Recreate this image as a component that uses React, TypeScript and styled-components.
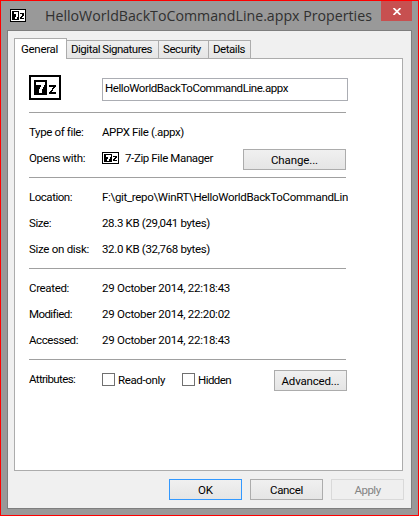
import React from "react";
import styled, { createGlobalStyle } from "styled-components";

const GlobalStyle = createGlobalStyle`
  *, *::before, *::after { box-sizing: border-box; }
  body { margin: 0; overflow: hidden; }
`;

const Window = styled.div`
  width: 419px;
  height: 516px;
  display: flex;
  flex-direction: column;
  padding: 0 6px 6px;
  border: 1px solid #ff0000;
  background: #999999;
  color: #000;
  font: 11.5px "Roboto", "Liberation Sans", sans-serif;
`;

const TitleBar = styled.header`
  height: 29px;
  flex: none;
  display: flex;
  align-items: flex-start;
  padding-left: 3px;
`;

const TitleIcon = styled.span`
  display: flex;
  margin-top: 8px;
  width: 35px;
`;

const Title = styled.h1`
  flex: 1;
  margin: 0;
  font: 400 14.2px/29px "Open Sans", "Noto Sans", sans-serif;
  color: #303030;
  white-space: nowrap;
`;

const CloseButton = styled.button`
  width: 31px;
  height: 20px;
  flex: none;
  display: flex;
  align-items: center;
  justify-content: center;
  padding: 1px 0 0;
  border: 0;
  background: #c75050;
`;

const Client = styled.main`
  flex: 1;
  display: flex;
  flex-direction: column;
  width: 405px;
  padding: 7px 6px 8px;
  border: 1px solid #7e7e7e;
  background: #f0f0f0;
`;

const TabList = styled.nav`
  display: flex;
  align-items: flex-end;
  height: 21px;
  flex: none;
  margin-bottom: -1px;
`;

const Tab = styled.button<{ $active?: boolean; $width: number }>`
  width: ${(p) => p.$width}px;
  height: ${(p) => (p.$active ? 21 : 18)}px;
  padding: 0 0 0 ${(p) => (p.$active ? 6 : 4)}px;
  margin-bottom: ${(p) => (p.$active ? 0 : 1)}px;
  border: 1px solid #acacac;
  border-left-width: ${(p) => (p.$active ? 1 : 0)}px;
  border-bottom: 0;
  background: ${(p) => (p.$active ? "#fff" : "linear-gradient(#f0f0f0, #e5e5e5)")};
  color: inherit;
  font: inherit;
  text-align: left;
  line-height: 17px;
  position: relative;
`;

const Panel = styled.section`
  width: 389px;
  height: 413px;
  flex: none;
  padding: 16px 0 0 14px;
  border: 1px solid #acacac;
  background: #fff;
`;

const Header = styled.div`
  display: flex;
  align-items: flex-start;
  height: 37px;
`;

const FileIcon = styled.span`
  display: flex;
  width: 73px;
`;

const NameField = styled.div`
  width: 246px;
  height: 23px;
  margin-top: 3px;
  padding-left: 2px;
  border: 1px solid #abadb3;
  line-height: 19px;
`;

const Divider = styled.hr`
  width: 317px;
  height: 1px;
  margin: 0;
  border: 0;
  background: #a0a0a0;
`;

const Group = styled.div`
  padding: 6px 0;
`;

const Row = styled.div`
  display: grid;
  grid-template-columns: 73px 246px;
  height: 26px;
  line-height: 26px;
`;

const Value = styled.div`
  display: flex;
  align-items: center;
  overflow: hidden;
  white-space: nowrap;
`;

const AppName = styled.span`
  flex: 1;
  padding-left: 6px;
`;

const Text = styled.span<{ $tracking?: number }>`
  display: inline-block;
  letter-spacing: ${(p) => p.$tracking ?? 0}px;
  white-space: nowrap;
`;

const Button = styled.button<{ $width?: number; $kind?: "default" | "disabled" }>`
  width: ${(p) => p.$width ?? 73}px;
  height: 21px;
  flex: none;
  padding: 1px 0 0;
  border: 1px solid
    ${(p) => (p.$kind === "default" ? "#3399ff" : p.$kind === "disabled" ? "#d9d9d9" : "#acacac")};
  background: ${(p) => (p.$kind === "disabled" ? "#efefef" : "linear-gradient(#f0f0f0, #e5e5e5)")};
  color: ${(p) => (p.$kind === "disabled" ? "#838383" : "#000")};
  font: inherit;
  line-height: 18px;
`;

const ChangeSlot = styled.span`
  display: flex;
  margin: 3px 2px 0 0;
`;

const AttributesRow = styled.div`
  display: grid;
  grid-template-columns: 73px 80px 92px 73px;
  height: 26px;
  line-height: 26px;
`;

const CheckLabel = styled.label`
  display: flex;
  align-items: center;
  gap: 3px;
  height: 28px;
`;

const Box = styled.span`
  width: 13px;
  height: 13px;
  margin-top: -1px;
  border: 1px solid #707070;
  background: #fff;
`;

const AdvancedSlot = styled.span`
  display: flex;
  align-items: flex-start;
  padding-top: 4px;
`;

const Actions = styled.footer`
  display: flex;
  justify-content: flex-end;
  gap: 8px;
  margin: 8px 1px 0 0;
`;

function SevenZip({ width, height, large }: { width: number; height: number; large?: boolean }) {
  return large ? (
    <svg width={width} height={height} viewBox="0 0 32 25" shapeRendering="crispEdges">
      <path d="M0 0h32v25H0z" />
      <path fill="#fff" d="M2 2h28v21H2z" />
      <path d="M5 5h13v15H5z" />
      <path fill="#fff" d="M7 7h9v3h-1v2h-1v2h-1v4h-3v-4h1v-2h1v-2H7z" />
      <path d="M20 10h7v2h-1v1h-1v1h-1v2h-1v1h4v2h-7v-2h1v-1h1v-1h1v-2h1v-1h-4z" />
    </svg>
  ) : (
    <svg width={width} height={height} viewBox="0 0 17 12" preserveAspectRatio="none" shapeRendering="crispEdges">
      <path d="M0 0h17v12H0z" />
      <path fill="#fff" d="M1 1h15v10H1z" />
      <path d="M2 2h8v8H2z" />
      <path fill="#fff" d="M4 3h5v2H8v2H7v2H5V7h1V5H4z" />
      <path d="M11 4h4v2h-1v1h-1v1h2v1h-4V7h1V6h1V5h-2z" />
    </svg>
  );
}

const tabs = [
  { label: "General", tracking: -0.3, width: 53, active: true },
  { label: "Digital Signatures", tracking: -0.49, width: 92 },
  { label: "Security", tracking: -0.41, width: 50 },
  { label: "Details", tracking: -0.45, width: 42 },
];

type Item = [string, number, string, number];

const storage: Item[] = [
  ["Location:", -0.47, "F:\\git_repo\\WinRT\\HelloWorldBackToCommandLin", -0.325],
  ["Size:", -0.4, "28.3 KB (29,041 bytes)", -0.34],
  ["Size on disk:", -0.29, "32.0 KB (32,768 bytes)", -0.34],
];

const dates: Item[] = [
  ["Created:", -0.34, "29 October 2014, 22:18:43", -0.26],
  ["Modified:", -0.57, "29 October 2014, 22:20:02", -0.26],
  ["Accessed:", -0.43, "29 October 2014, 22:18:43", -0.26],
];

function Rows({ items }: { items: Item[] }) {
  return (
    <Group>
      {items.map(([label, lt, value, vt]) => (
        <Row key={label}>
          <Text $tracking={lt}>{label}</Text>
          <Value>
            <Text $tracking={vt}>{value}</Text>
          </Value>
        </Row>
      ))}
    </Group>
  );
}

export default function App() {
  return (
    <>
      <GlobalStyle />
      <Window>
        <TitleBar>
          <TitleIcon>
            <SevenZip width={16} height={13} />
          </TitleIcon>
          <Title>HelloWorldBackToCommandLine.appx Properties</Title>
          <CloseButton aria-label="Close">
            <svg width="8" height="7" viewBox="0 0 8 7" stroke="#fff" strokeWidth="1.7">
              <path d="M.5 0l7 7M7.5 0l-7 7" />
            </svg>
          </CloseButton>
        </TitleBar>
        <Client>
          <TabList>
            {tabs.map((t) => (
              <Tab key={t.label} $active={t.active} $width={t.width}>
                <Text $tracking={t.tracking}>{t.label}</Text>
              </Tab>
            ))}
          </TabList>
          <Panel>
            <Header>
              <FileIcon>
                <SevenZip width={32} height={25} large />
              </FileIcon>
              <NameField>
                <Text $tracking={-0.435}>HelloWorldBackToCommandLine.appx</Text>
              </NameField>
            </Header>
            <Divider />
            <Group>
              <Row>
                <Text $tracking={-0.36}>Type of file:</Text>
                <Value>
                  <Text $tracking={-0.39}>APPX File (.appx)</Text>
                </Value>
              </Row>
              <Row>
                <Text $tracking={-0.35}>Opens with:</Text>
                <Value>
                  <SevenZip width={17} height={12} />
                  <AppName>
                    <Text $tracking={-0.38}>7-Zip File Manager</Text>
                  </AppName>
                  <ChangeSlot>
                    <Button $width={103}>
                      <Text $tracking={-0.12}>Change...</Text>
                    </Button>
                  </ChangeSlot>
                </Value>
              </Row>
            </Group>
            <Divider />
            <Rows items={storage} />
            <Divider />
            <Rows items={dates} />
            <Divider />
            <Group>
              <AttributesRow>
                <Text $tracking={-0.62}>Attributes:</Text>
                <CheckLabel>
                  <Box />
                  <Text $tracking={-0.36}>Read-only</Text>
                </CheckLabel>
                <CheckLabel>
                  <Box />
                  <Text $tracking={-0.55}>Hidden</Text>
                </CheckLabel>
                <AdvancedSlot>
                  <Button>
                    <Text $tracking={-0.17}>Advanced...</Text>
                  </Button>
                </AdvancedSlot>
              </AttributesRow>
            </Group>
          </Panel>
          <Actions>
            <Button $kind="default">OK</Button>
            <Button>
              <Text $tracking={-0.33}>Cancel</Text>
            </Button>
            <Button $kind="disabled" disabled>
              <Text $tracking={-0.5}>Apply</Text>
            </Button>
          </Actions>
        </Client>
      </Window>
    </>
  );
}
